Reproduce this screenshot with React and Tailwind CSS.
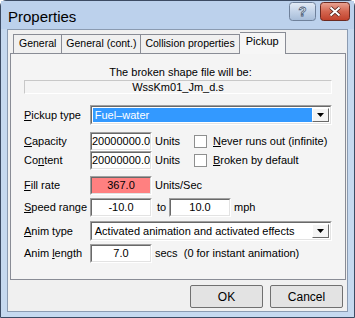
import React from "react";

const font = { fontFamily: '"Liberation Sans", Arial, sans-serif' };

function Sunken({ className = "", children }) {
  // classic 3D sunken edit box
  return (
    <div
      className={
        "border border-t-[#a0a0a0] border-l-[#a0a0a0] border-b-white border-r-white " +
        className
      }
    >
      <div className="h-full w-full border border-t-[#696969] border-l-[#696969] border-b-[#e3e3e3] border-r-[#e3e3e3] flex items-center">
        {children}
      </div>
    </div>
  );
}

function Edit({ value, w = "w-[62px]", bg = "bg-white" }) {
  return (
    <Sunken className={`${w} h-[19px]`}>
      <div className={`w-full h-full ${bg} text-center leading-[15px]`}>{value}</div>
    </Sunken>
  );
}

function Combo({ value, selected }) {
  return (
    <Sunken className="w-[243px] h-[20px]">
      <div className="flex w-full h-full bg-white p-[1px]">
        <div
          className={
            "flex-1 pl-[2px] leading-[14px] " +
            (selected ? "bg-[#3399ff] text-white" : "")
          }
        >
          {value}
        </div>
        <div className="w-[17px] h-full flex items-center justify-center bg-[#f4f4f4] border border-t-white border-l-white border-b-[#696969] border-r-[#696969]">
          <svg width="7" height="4" viewBox="0 0 7 4">
            <path d="M0 0h7L3.5 4z" fill="#000" />
          </svg>
        </div>
      </div>
    </Sunken>
  );
}

function Check({ label }) {
  return (
    <div className="flex items-center gap-[6px]">
      <div className="w-[13px] h-[13px] bg-white border border-[#8e8f8f]" />
      <span>{label}</span>
    </div>
  );
}

function Row({ label, children, className = "" }) {
  return (
    <div className={"flex items-center " + className}>
      <div className="w-[66px]">{label}</div>
      {children}
    </div>
  );
}

function Button({ children }) {
  return (
    <div className="w-[73px] h-[23px] flex items-center justify-center border border-[#707070] rounded-[2px] bg-[#e3e3e3] text-[12px]">
      {children}
    </div>
  );
}

function HelpButton() {
  return (
    <svg width="27" height="19" viewBox="0 0 27 19">
      <defs>
        <linearGradient id="hg" x1="0" y1="0" x2="0" y2="1">
          <stop offset="0" stopColor="#e4ecf6" />
          <stop offset="0.5" stopColor="#c3d3e8" />
          <stop offset="1" stopColor="#a6bcd8" />
        </linearGradient>
      </defs>
      <rect x="0.5" y="0.5" width="26" height="18" rx="3" fill="url(#hg)" stroke="#6f819b" />
      <text x="13.5" y="14" textAnchor="middle" fontSize="13" fontWeight="bold" fill="#fff" stroke="#4b5d78" strokeWidth="0.8" fontFamily="Liberation Sans, Arial, sans-serif">?</text>
    </svg>
  );
}

function CloseButton() {
  return (
    <svg width="30" height="19" viewBox="0 0 30 19">
      <defs>
        <linearGradient id="cg" x1="0" y1="0" x2="0" y2="1">
          <stop offset="0" stopColor="#e9a595" />
          <stop offset="0.5" stopColor="#d46650" />
          <stop offset="1" stopColor="#c0402a" />
        </linearGradient>
      </defs>
      <rect x="0.5" y="0.5" width="29" height="18" rx="3" fill="url(#cg)" stroke="#6b2a21" />
      <path d="M10.5 5.5l9 8M19.5 5.5l-9 8" stroke="#4a1d16" strokeWidth="3.6" />
      <path d="M10.5 5.5l9 8M19.5 5.5l-9 8" stroke="#fff" strokeWidth="2" />
    </svg>
  );
}

export default function App() {
  return (
    <div
      className="w-[355px] h-[318px] text-[11px] text-black bg-[#c6d9ef] border border-[#3c4b63] rounded-t-[6px] flex flex-col"
      style={font}
    >
      {/* Title bar */}
      <div className="h-[28px] flex items-start pl-[7px] pr-[4px] bg-[#bcd1ec]">
        <span className="text-[15px] text-black mt-[5px]">Properties</span>
        <div className="ml-auto flex gap-[4px] mt-[1px]">
          <HelpButton />
          <CloseButton />
        </div>
      </div>

      {/* Client area */}
      <div className="mx-[6px] h-[283px] bg-[#f0f0f0] border border-[#8b9bb1] flex flex-col">
        {/* Tabs */}
        <div className="flex items-end h-[22px] pl-[5px] mt-[1px] text-[10.5px]">
          <div className="h-[19px] px-[5px] flex items-center border border-[#898c95] border-b-0 bg-[#f0f0f0]">General</div>
          <div className="h-[19px] px-[4px] flex items-center border border-[#898c95] border-b-0 border-l-0 bg-[#f0f0f0]">General (cont.)</div>
          <div className="h-[19px] px-[4px] flex items-center border border-[#898c95] border-b-0 border-l-0 bg-[#f0f0f0]">Collision properties</div>
          <div className="h-[22px] px-[6px] pb-[4px] flex items-center border border-[#898c95] border-b-0 border-l-0 bg-[#f6f6f6] -mb-px relative z-10 text-[11px]">Pickup</div>
        </div>
        {/* Panel */}
        <div className="ml-[2px] w-[336px] h-[227px] border border-[#898c95] bg-[#f4f4f4] px-[13px] pt-[12px]">
          <div className="text-center leading-[13px] pl-[5px]">The broken shape file will be:</div>
          <div className="mt-[1px] h-[14px] border border-[#c8c8c8] border-r-white border-b-white text-center leading-[12px]">WssKm01_Jm_d.s</div>

          <div className="mt-[11px] flex flex-col">
            <Row label={<span><u>P</u>ickup type</span>}>
              <Combo value="Fuel–water" selected />
            </Row>
            <Row label={<span><u>C</u>apacity</span>} className="mt-[7px]">
              <Edit value="20000000.0" />
              <span className="ml-[3px] w-[39px]">Units</span>
              <Check label={<span><u>N</u>ever runs out (infinite)</span>} />
            </Row>
            <Row label={<span>Co<u>n</u>tent</span>}>
              <Edit value="20000000.0" />
              <span className="ml-[3px] w-[39px]">Units</span>
              <Check label={<span><u>B</u>roken by default</span>} />
            </Row>
            <Row label={<span><u>F</u>ill rate</span>} className="mt-[6px]">
              <Edit value="367.0" bg="bg-[#ff8080]" />
              <span className="ml-[3px]">Units/Sec</span>
            </Row>
            <Row label={<span><u>S</u>peed range</span>} className="mt-[3px]">
              <Edit value="-10.0" />
              <span className="ml-[5px] w-[12px]">to</span>
              <Edit value="10.0" />
              <span className="ml-[3px]">mph</span>
            </Row>
            <Row label={<span><u>A</u>nim type</span>} className="mt-[4px]">
              <Combo value="Activated animation and activated effects" />
            </Row>
            <Row label={<span>Anim <u>l</u>ength</span>} className="mt-[3px]">
              <Edit value="7.0" />
              <span className="ml-[3px] whitespace-pre">secs  (0 for instant animation)</span>
            </Row>
          </div>
        </div>
        {/* Buttons */}
        <div className="flex justify-end gap-[7px] mt-[5px] pr-[4px]">
          <Button>OK</Button>
          <Button>Cancel</Button>
        </div>
      </div>
    </div>
  );
}
